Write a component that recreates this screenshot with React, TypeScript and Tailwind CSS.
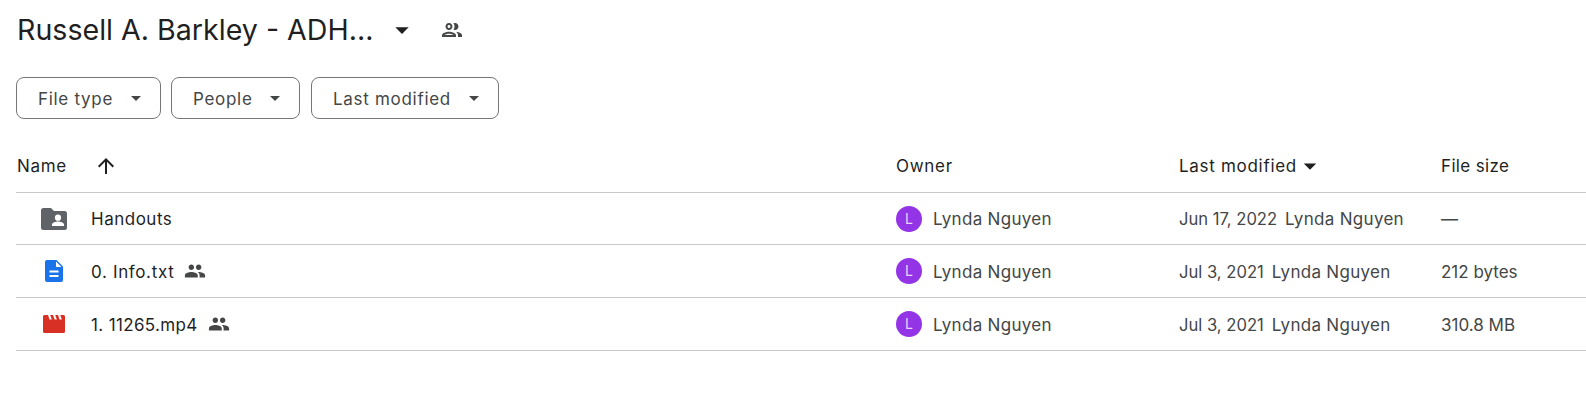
import React from "react";

const Caret = ({ className = "" }: { className?: string }) => (
  <svg viewBox="0 0 24 24" className={className} fill="currentColor"><path d="M7 10l5 5 5-5z" /></svg>
);

const PeopleOutline = ({ className = "" }: { className?: string }) => (
  <svg viewBox="0 0 24 24" className={className} fill="currentColor">
    <path d="M9 13.750c-2.340 0-7 1.170-7 3.500V19h14v-1.750c0-2.330-4.660-3.500-7-3.500zM4.340 17c.84-.58 2.870-1.250 4.660-1.250s3.820.67 4.660 1.250H4.340zM9 12c1.930 0 3.500-1.570 3.500-3.500S10.930 5 9 5 5.500 6.570 5.500 8.500 7.070 12 9 12zm0-5c.83 0 1.500.67 1.500 1.500S9.830 10 9 10s-1.500-.67-1.500-1.500S8.170 7 9 7zm7.040 6.810c1.160.84 1.960 1.960 1.960 3.440V19h4v-1.750c0-2.020-3.500-3.170-5.960-3.440zM15 12c1.930 0 3.500-1.570 3.500-3.500S16.930 5 15 5c-.54 0-1.040.13-1.500.35.63.89 1 1.980 1 3.150s-.37 2.260-1 3.150c.46.22.96.35 1.500.35z" />
  </svg>
);

const PeopleFilled = ({ className = "" }: { className?: string }) => (
  <svg viewBox="0 0 24 24" className={className} fill="currentColor">
    <path d="M16 11c1.660 0 2.990-1.340 2.990-3S17.660 5 16 5s-3 1.340-3 3 1.340 3 3 3zm-8 0c1.660 0 2.990-1.340 2.990-3S9.660 5 8 5 5 6.340 5 8s1.340 3 3 3zm0 2c-2.330 0-7 1.170-7 3.500V19h14v-2.500C15 14.170 10.330 13 8 13zm8 0c-.29 0-.62.02-.97.05 1.160.84 1.970 1.970 1.970 3.450V19h6v-2.500c0-2.330-4.670-3.500-7-3.500z" />
  </svg>
);

const FolderShared = () => (
  <svg viewBox="0 0 26 22" className="w-[26px] h-[22px]">
    <path fill="#5f6368" d="M2.500 0h7.500l3 3h10.500A2.500 2.500 0 0 1 26 5.500V19.500A2.500 2.500 0 0 1 23.500 22h-21A2.500 2.500 0 0 1 0 19.500v-17A2.500 2.500 0 0 1 2.500 0z" />
    <circle cx="17" cy="9.700" r="3.100" fill="#fff" />
    <path fill="#fff" d="M11 18v-1.400c0-2 4-3 6-3s6 1 6 3V18z" />
  </svg>
);

const DocIcon = () => (
  <svg viewBox="0 0 18 22" className="w-[18px] h-[22px]">
    <path fill="#1a73e8" d="M2 0h9.500L18 6.500V20a2 2 0 0 1-2 2H2a2 2 0 0 1-2-2V2a2 2 0 0 1 2-2z" />
    <path fill="#fff" d="M11 1.500l5.500 5.500H11z" />
    <path fill="#fff" d="M4.500 10.500h9v2h-9zM4.500 15h9v2h-9z" />
  </svg>
);

const VideoIcon = () => (
  <svg viewBox="0 0 22 18" className="w-[22px] h-[18px]">
    <path fill="#d93025" d="M1.500 0h19A1.500 1.500 0 0 1 22 1.500v15a1.500 1.500 0 0 1-1.500 1.500h-19A1.500 1.500 0 0 1 0 16.500v-15A1.500 1.500 0 0 1 1.500 0z" />
    <path fill="#fff" d="M5 0h2.200l1.600 4.500H6.600zM10 0h2.200l1.600 4.500h-2.200zM15 0h2.200l1.600 4.500h-2.200z" />
  </svg>
);

const Chip = ({ label, w }: { label: string; w: string }) => (
  <button className={`${w} h-[42px] flex items-center justify-between pl-[21px] pr-[12px] border border-[#747775] rounded-[8px] text-[17px] leading-[26px] tracking-[0.7px] text-[#444746]`}>
    <span className="pt-[1px]">{label}</span>
    <Caret className="w-[24px] h-[24px] text-[#444746]" />
  </button>
);

const Avatar = () => (
  <span className="w-[26px] h-[26px] rounded-full bg-[#9334e6] text-[#e9d5fb] text-[14px] flex items-center justify-center">L</span>
);

const rows = [
  { icon: <FolderShared />, name: "Handouts", track: "tracking-[0.5px]", shared: false, date: "Jun 17, 2022", size: "—", h: "h-[52px]" },
  { icon: <DocIcon />, name: "0. Info.txt", track: "tracking-[0.65px]", shared: true, date: "Jul 3, 2021", size: "212 bytes", h: "h-[53px]" },
  { icon: <VideoIcon />, name: "1. 11265.mp4", track: "tracking-[0.35px]", shared: true, date: "Jul 3, 2021", size: "310.8 MB", h: "h-[53px]" },
];

const cols = "grid grid-cols-[880px_283px_262px_1fr] items-center";

export default function App() {
  return (
    <div className="w-[1586px] h-[406px] bg-white overflow-hidden font-['Inter',sans-serif] text-[#1f1f1f]">
      <div className="pl-[17px] pt-[9px] h-[77px]">
        <div className="flex items-center h-[42px]">
          <span className="text-[28.6px] leading-[42px] w-[369px] whitespace-nowrap">Russell A. Barkley - ADH...</span>
          <Caret className="w-[32px] h-[32px] text-[#1f1f1f]" />
          <PeopleOutline className="w-[24px] h-[24px] text-[#444746] ml-[22px]" />
        </div>
      </div>
      <div className="flex pl-[16px] gap-[10px]">
        <Chip label="File type" w="w-[145px]" />
        <Chip label="People" w="w-[129px]" />
        <Chip label="Last modified" w="w-[188px] ml-[1px]" />
      </div>
      <div className="ml-[16px] mt-[21px]">
        <div className={`${cols} h-[53px] border-b border-[#c7c7c7] text-[17px] leading-[26px]`}>
          <div className="flex items-center pl-[1px]">
            <span className="tracking-[0.7px]">Name</span>
            <svg viewBox="0 0 24 24" className="w-[24px] h-[24px] ml-[27px]" fill="currentColor"><path d="M4 12l1.410 1.410L11 7.830V20h2V7.830l5.580 5.590L20 12l-8-8-8 8z" /></svg>
          </div>
          <div className="tracking-[0.7px]">Owner</div>
          <div className="flex items-center">
            <span className="tracking-[0.7px]">Last modified</span>
            <Caret className="w-[30px] h-[30px] -ml-[2px]" />
          </div>
          <div className="tracking-[0.35px]">File size</div>
        </div>
        {rows.map((r) => (
          <div key={r.name} className={`${cols} ${r.h} border-b border-[#c7c7c7] text-[17px] leading-[26px] text-[#444746]`}>
            <div className="flex items-center">
              <span className="w-[76px] flex justify-center shrink-0">{r.icon}</span>
              <span className={`text-[#1f1f1f] ${r.track} -ml-[1px] pt-[1px]`}>{r.name}</span>
              {r.shared && <PeopleFilled className="w-[22px] h-[22px] text-[#444746] ml-[10px]" />}
            </div>
            <div className="flex items-center gap-[11px]">
              <Avatar />
              <span className="tracking-[0.3px] pt-[1px]">Lynda Nguyen</span>
            </div>
            <div className="flex items-center gap-[8px] pt-[1px]">
              <span className="text-[16.6px]">{r.date}</span>
              <span className="tracking-[0.3px]">Lynda Nguyen</span>
            </div>
            <div className="pt-[1px]">{r.size}</div>
          </div>
        ))}
      </div>
    </div>
  );
}
